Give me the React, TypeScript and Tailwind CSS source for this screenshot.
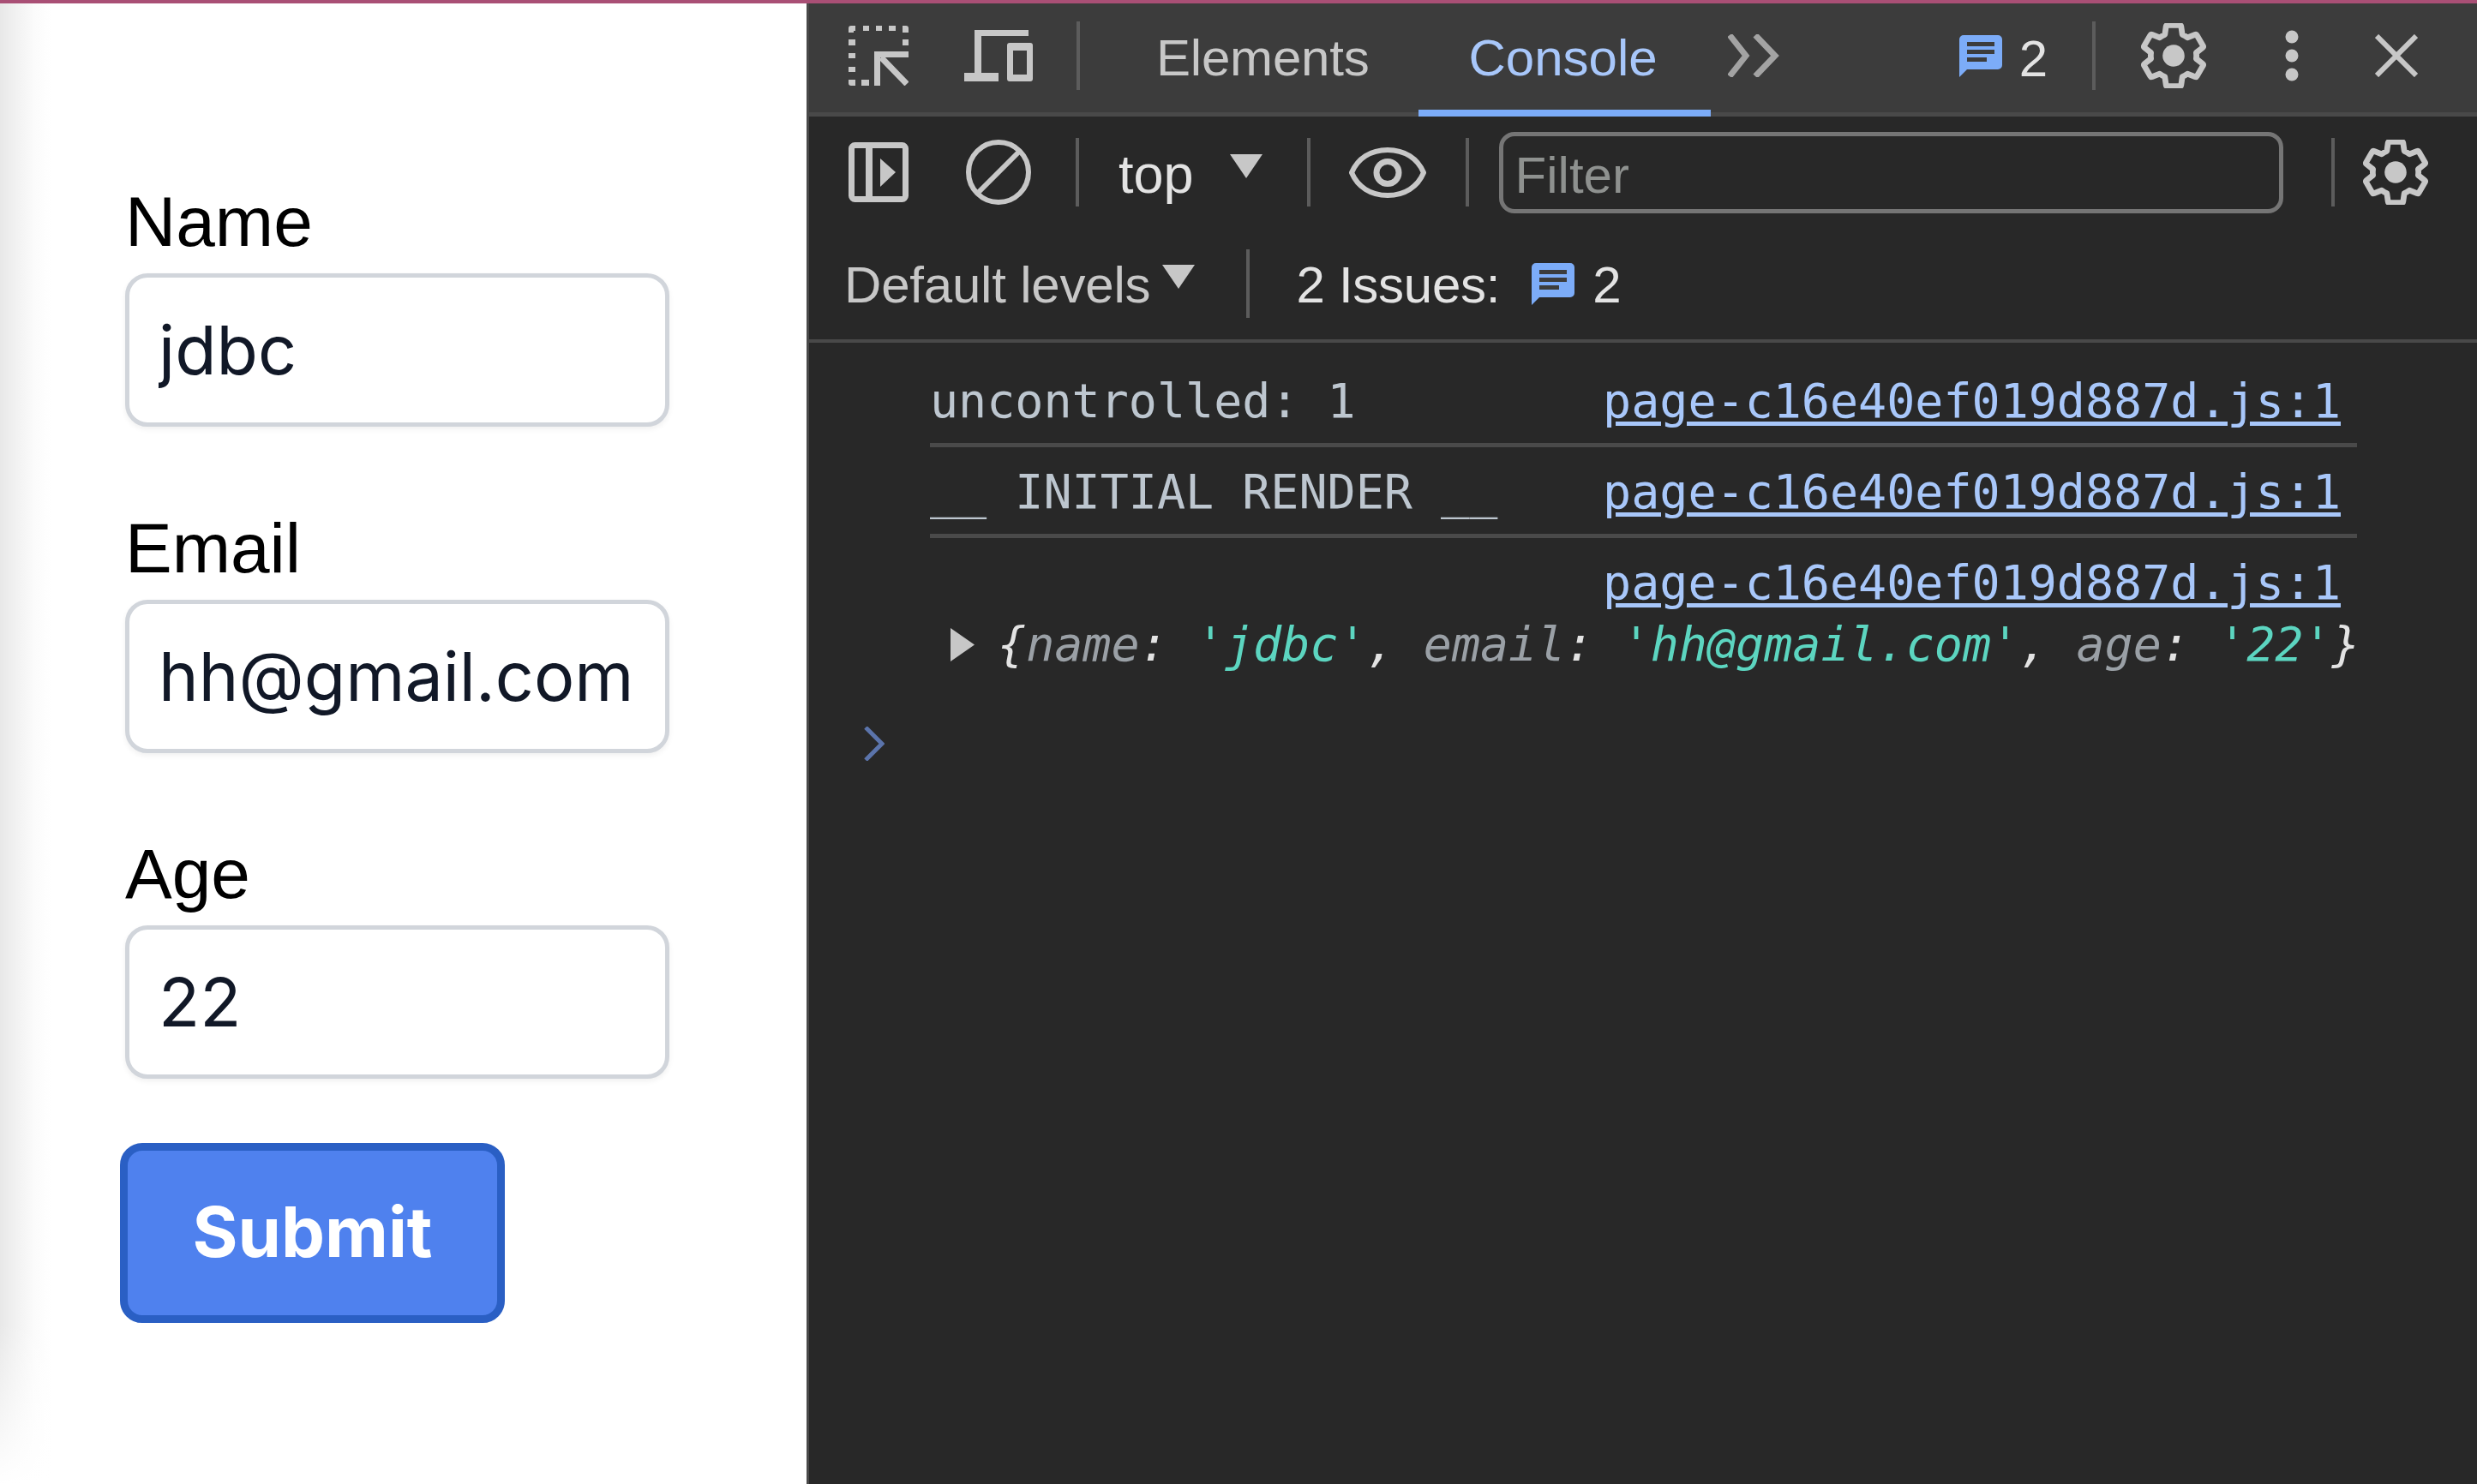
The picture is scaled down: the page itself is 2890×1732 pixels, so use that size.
const GEAR = "M19.43 12.98c.04-.32.07-.64.07-.98s-.03-.66-.07-.98l2.11-1.65c.19-.15.24-.42.12-.64l-2-3.46c-.12-.22-.39-.3-.61-.22l-2.49 1c-.52-.4-1.08-.73-1.69-.98l-.38-2.65C14.46 2.18 14.25 2 14 2h-4c-.25 0-.46.18-.49.42l-.38 2.65c-.61.25-1.17.59-1.69.98l-2.49-1c-.23-.09-.49 0-.61.22l-2 3.46c-.13.22-.07.49.12.64l2.11 1.65c-.04.32-.07.65-.07.98s.03.66.07.98l-2.11 1.65c-.19.15-.24.42-.12.64l2 3.46c.12.22.39.3.61.22l2.49-1c.52.4 1.08.73 1.69.98l.38 2.65c.03.24.24.42.49.42h4c.25 0 .46-.18.49-.42l.38-2.65c.61-.25 1.17-.59 1.69-.98l2.49 1c.23.09.49 0 .61-.22l2-3.46c.12-.22.07-.49-.12-.64l-2.11-1.65z";

function Gear() {
  return (
    <svg width="76" height="76" viewBox="1.3 1.3 21.4 21.4" className="shrink-0">
      <path d={GEAR} fill="none" stroke="#c7c7c7" strokeWidth="1.9" strokeLinejoin="round" />
      <circle cx="12" cy="12" r="3.6" fill="#c7c7c7" />
    </svg>
  );
}

function IssueIcon() {
  return (
    <svg width="50" height="49" viewBox="0 0 50 49" className="shrink-0">
      <path d="M5 0H45a5 5 0 0 1 5 5V35a5 5 0 0 1-5 5H9L0 49V5a5 5 0 0 1 5-5Z" fill="#7cacf8" />
      <rect x="9" y="8" width="32" height="5" fill="#3c3c3c" />
      <rect x="9" y="17" width="32" height="5" fill="#3c3c3c" />
      <rect x="9" y="26" width="23" height="5" fill="#3c3c3c" />
    </svg>
  );
}

function Divider({ className = "" }: { className?: string }) {
  return <div className={`w-[4px] h-[80px] shrink-0 bg-[#5c5c5c] ${className}`} />;
}

function Caret({ className = "" }: { className?: string }) {
  return (
    <svg width="38" height="28" viewBox="0 0 38 28" className={`shrink-0 ${className}`}>
      <path d="M0 0H38L19 28Z" fill="#c7c7c7" />
    </svg>
  );
}

function Field({ label, value, className = "" }: { label: string; value: string; className?: string }) {
  return (
    <div className={`flex flex-col ${className}`}>
      <label className="text-[82px] leading-[100px] text-black font-['Liberation_Sans',sans-serif]">{label}</label>
      <input
        readOnly
        defaultValue={value}
        className="mt-[10px] w-[635px] h-[179px] rounded-[26px] border-[5px] border-[#d1d5db] bg-white pl-[34px] pb-[2px] text-[79px] text-[#111827] shadow-[0_3px_6px_rgba(0,0,0,0.06)] outline-none font-['Inter',sans-serif]"
      />
    </div>
  );
}

function SourceLink() {
  return (
    <span className="mr-[19px] text-[#a8c7fa] underline decoration-[5px] underline-offset-[5px]">page-c16e40ef019d887d.js:1</span>
  );
}

export default function App() {
  return (
    <div className="w-[2890px] h-[1732px] overflow-hidden flex flex-col bg-white">
      <div className="h-[4px] shrink-0 bg-[#a94f75]" />
      <div className="flex flex-1 min-h-0">
        <div className="w-[941px] shrink-0 pl-[146px] pt-[205px] bg-[linear-gradient(180deg,rgba(255,255,255,0)_1540px,#ffffff_1728px),linear-gradient(90deg,#e8e8e8_0px,#f2f2f2_20px,#fbfbfb_40px,#ffffff_60px)]">
          <Field label="Name" value="jdbc" />
          <Field label="Email" value="hh@gmail.com" className="mt-[92px]" />
          <Field label="Age" value="22" className="mt-[91px]" />
          <button className="block mt-[75px] -ml-[6px] w-[449px] h-[210px] rounded-[26px] border-[9px] border-[#2a5fc4] bg-[#4f81ee] text-white text-[81px] font-bold font-['Inter',sans-serif]">
            Submit
          </button>
        </div>

        <div className="flex-1 min-w-0 flex flex-col border-l-[3px] border-[#494949] bg-[#282828] text-[60px] font-['Liberation_Sans',sans-serif]">
          {/* Tab bar */}
          <div className="h-[132px] shrink-0 flex items-center pb-[5px] border-b-[5px] border-[#494949] bg-[#3c3c3c] text-[#c7c7c7]">
            <svg width="70" height="70" viewBox="0 0 70 70" fill="#c7c7c7" className="ml-[46px] shrink-0">
              <path d="M0 3a3 3 0 0 1 3-3h5v6H6v2H0ZM17 0h7v6h-7ZM32 0h7v6h-7ZM47 0h8v6h-8ZM63 0h4a3 3 0 0 1 3 3v5h-7ZM0 16h8v7H0ZM63 16h7v7h-7ZM0 32h8v6H0ZM0 48h8v6H0ZM0 63h8v7H3a3 3 0 0 1-3-3ZM15 63h9v7h-9Z" />
              <path d="M30 30h40v7H37v33h-7Z" />
              <path d="M38 37L68 68" stroke="#c7c7c7" strokeWidth="7" />
            </svg>
            <svg width="80" height="60" viewBox="0 0 80 60" fill="#c7c7c7" className="ml-[65px] shrink-0">
              <path d="M12 0H75V7H20V50H40V60H0V50H12Z" />
              <path fillRule="evenodd" d="M53 15H77a3 3 0 0 1 3 3V57a3 3 0 0 1-3 3H53a3 3 0 0 1-3-3V18a3 3 0 0 1 3-3ZM57 24V52H73V24Z" />
            </svg>
            <Divider className="ml-[51px]" />
            <span className="ml-[89px] pt-[5px] tracking-[-0.2px]">Elements</span>
            <div className="relative h-full flex items-center ml-[116px]">
              <span className="pt-[5px] text-[#a8c7fa]">Console</span>
              <div className="absolute left-[-59px] right-[-62px] bottom-[-10px] h-[8px] bg-[#7cacf8]" />
            </div>
            <svg width="60" height="50" viewBox="0 0 60 50" fill="none" stroke="#a3a3a3" strokeWidth="7" className="ml-[82px] shrink-0">
              <path d="M2 1L21 25L2 49M32 1L55 25L32 49" />
            </svg>
            <div className="ml-[210px] shrink-0"><IssueIcon /></div>
            <span className="ml-[20px] pt-[7px] text-[#e3e3e3]">2</span>
            <Divider className="ml-[52px]" />
            <div className="ml-[53px] shrink-0"><Gear /></div>
            <svg width="16" height="60" viewBox="0 0 16 60" fill="#c7c7c7" className="ml-[92px] shrink-0">
              <circle cx="8" cy="8" r="7.5" />
              <circle cx="8" cy="30" r="7.5" />
              <circle cx="8" cy="52" r="7.5" />
            </svg>
            <svg width="50" height="50" viewBox="0 0 50 50" stroke="#c7c7c7" strokeWidth="6" className="ml-[89px] shrink-0">
              <path d="M2 2L48 48M48 2L2 48" />
            </svg>
          </div>

          {/* Console toolbar */}
          <div className="h-[124px] shrink-0 flex items-center pt-[6px] text-[#c7c7c7]">
            <svg width="70" height="70" viewBox="0 0 70 70" className="ml-[46px] shrink-0">
              <rect x="3.5" y="3.5" width="63" height="63" rx="4" fill="none" stroke="#c7c7c7" strokeWidth="7" />
              <rect x="20" y="3" width="8" height="64" fill="#c7c7c7" />
              <path d="M37 19L55 35L37 52Z" fill="#c7c7c7" />
            </svg>
            <svg width="76" height="76" viewBox="0 0 76 76" fill="none" stroke="#c7c7c7" strokeWidth="6" className="ml-[67px] shrink-0">
              <circle cx="38" cy="38" r="35" />
              <path d="M13 63L63 13" />
            </svg>
            <Divider className="ml-[52px]" />
            <span className="ml-[46px] pt-[5px] text-[63px] text-[#e3e3e3]">top</span>
            <Caret className="ml-[42px] mb-[14px]" />
            <Divider className="ml-[52px]" />
            <svg width="90" height="59" viewBox="0 0 90 59" fill="none" stroke="#c7c7c7" strokeWidth="6" className="ml-[45px] shrink-0">
              <path d="M45 3C25 3 10 13 3 29.5C10 46 25 56 45 56C65 56 80 46 87 29.5C80 13 65 3 45 3Z" />
              <circle cx="45" cy="29.5" r="13" strokeWidth="7" />
            </svg>
            <Divider className="ml-[46px]" />
            <div className="ml-[35px] w-[915px] h-[95px] shrink-0 flex items-center pl-[14px] pt-[7px] rounded-[18px] border-[5px] border-[#757575] text-[#8e918f]">
              Filter
            </div>
            <Divider className="ml-[56px]" />
            <div className="ml-[33px] shrink-0"><Gear /></div>
          </div>

          <div className="h-[140px] shrink-0 flex items-center pt-[6px] border-b-[4px] border-[#494949] text-[#c7c7c7]">
            <span className="ml-[41px] pt-[3px] tracking-[-0.2px]">Default levels</span>
            <Caret className="ml-[14px] mb-[16px]" />
            <Divider className="ml-[60px]" />
            <span className="ml-[54px] pt-[3px] tracking-[-0.25px] text-[#e3e3e3]">2 Issues:</span>
            <div className="ml-[37px] shrink-0"><IssueIcon /></div>
            <span className="ml-[21px] pt-[3px] text-[#e3e3e3]">2</span>
          </div>

          {/* Console output */}
          <div className="flex-1 pt-[16px] pl-[141px] text-[55px] text-[#bdc6cf] font-['DejaVu_Sans_Mono',monospace]">
            <div className="w-[1665px]">
              <div className="h-[106px] pt-[3px] leading-[98px] flex justify-between whitespace-pre border-b-[5px] border-[#4a4a4a]">
                <span>uncontrolled: 1</span>
                <SourceLink />
              </div>
              <div className="h-[106px] pt-[3px] leading-[98px] flex justify-between whitespace-pre border-b-[5px] border-[#4a4a4a]">
                <span>__ INITIAL RENDER __</span>
                <SourceLink />
              </div>
              <div className="h-[88px] pt-[3px] leading-[98px] flex justify-end whitespace-pre">
                <SourceLink />
              </div>
              <div className="h-[72px] leading-[72px] flex items-center whitespace-pre">
                <svg width="28" height="39" viewBox="0 0 28 39" className="ml-[24px] shrink-0">
                  <path d="M0 0L28 19.5L0 39Z" fill="#c7c7c7" />
                </svg>
                <span className="ml-[27px] italic text-[#e3e3e3]">
                  {"{"}
                  <span className="text-[#9aa0a6]">name</span>:{" "}
                  <span className="text-[#5cd5c0]">'jdbc'</span>,{" "}
                  <span className="text-[#9aa0a6]">email</span>:{" "}
                  <span className="text-[#5cd5c0]">'hh@gmail.com'</span>,{" "}
                  <span className="text-[#9aa0a6]">age</span>:{" "}
                  <span className="text-[#5cd5c0]">'22'</span>
                  {"}"}
                </span>
              </div>
            </div>
            <svg width="24" height="40" viewBox="0 0 24 40" fill="none" stroke="#5b74ab" strokeWidth="5" className="mt-[60px] -ml-[77px]">
              <path d="M2 1L21 20L2 39" />
            </svg>
          </div>
        </div>
      </div>
    </div>
  );
}
